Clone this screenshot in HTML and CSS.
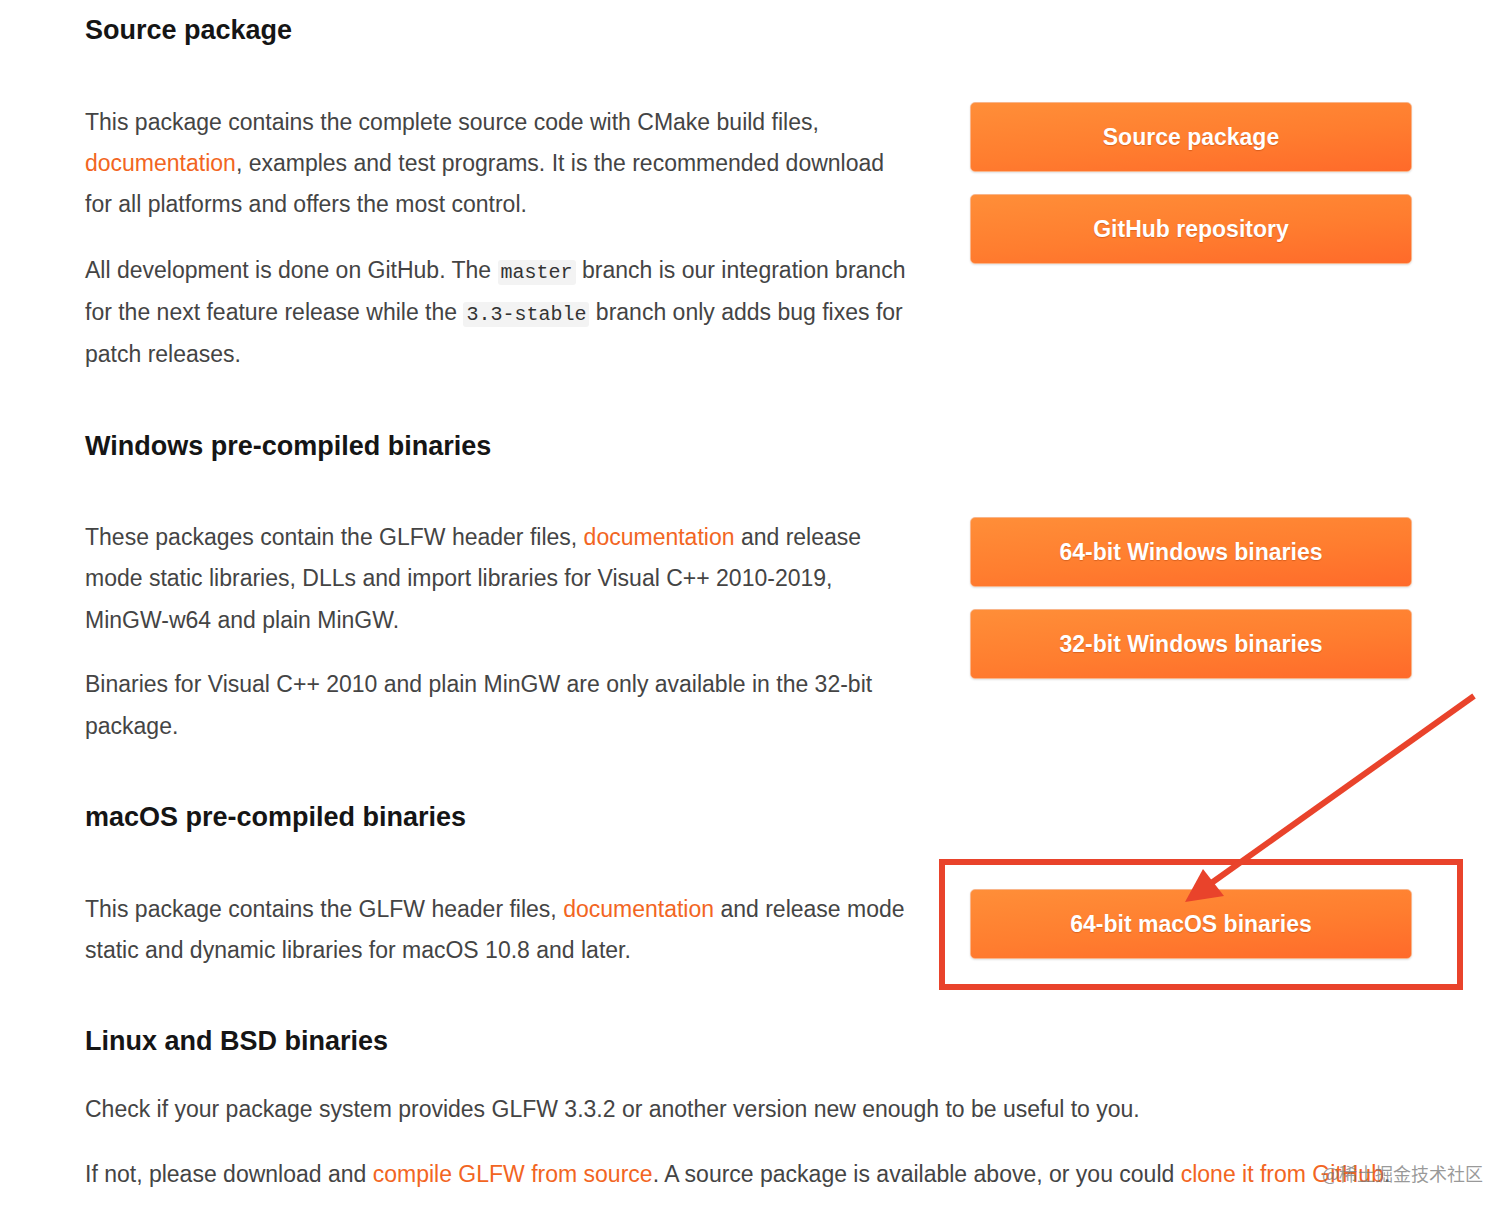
FILE: index.html
```html
<!doctype html>
<html>
<head>
<meta charset="utf-8">
<title>Download | GLFW</title>
<link rel="stylesheet" href="styles.css">
</head>
<body>
<div id="content">

	<h2 class="first">Source package</h2>
	<div class="row">
		<div class="text">
			<p>
				This package contains the complete source code with CMake build files,
				<a href="#">documentation</a>, examples and test programs. It is the recommended download
				for all platforms and offers the most control.
			</p>
			<p class="has-code">
				All development is done on GitHub. The <code>master</code> branch is our integration branch
				for the next feature release while the <code>3.3-stable</code> branch only adds bug fixes for
				patch releases.
			</p>
		</div>
		<div class="buttons">
			<a class="btn" href="#">Source package</a>
			<a class="btn" href="#">GitHub repository</a>
		</div>
	</div>

	<h2>Windows pre-compiled binaries</h2>
	<div class="row">
		<div class="text">
			<p>
				These packages contain the GLFW header files, <a href="#">documentation</a> and release
				mode static libraries, DLLs and import libraries for Visual C++ 2010-2019,
				MinGW-w64 and plain MinGW.
			</p>
			<p>
				Binaries for Visual C++ 2010 and plain MinGW are only available in the 32-bit
				package.
			</p>
		</div>
		<div class="buttons">
			<a class="btn" href="#">64-bit Windows binaries</a>
			<a class="btn" href="#">32-bit Windows binaries</a>
		</div>
	</div>

	<h2>macOS pre-compiled binaries</h2>
	<div class="row">
		<div class="text">
			<p>
				This package contains the GLFW header files, <a href="#">documentation</a> and release mode
				static and dynamic libraries for macOS 10.8 and later.
			</p>
		</div>
		<div class="buttons">
			<a class="btn" href="#">64-bit macOS binaries</a>
		</div>
	</div>

	<h2>Linux and BSD binaries</h2>
	<p>Check if your package system provides GLFW 3.3.2 or another version new enough to be useful to you.</p>
	<p>If not, please download and <a href="#">compile GLFW from source</a>. A source package is available above, or you could <a href="#">clone it from GitHub</a>.</p>

</div>

<!-- annotation drawn over the page -->
<svg class="annot" width="1512" height="1213" viewBox="0 0 1512 1213">
	<rect x="942" y="862" width="518" height="125" fill="none" stroke="#e9432b" stroke-width="6"/>
	<line x1="1474" y1="696" x2="1210" y2="884" stroke="#e9432b" stroke-width="6"/>
	<polygon points="1185,902 1203,869 1224,896" fill="#e9432b"/>
</svg>
<div class="watermark">@稀土掘金技术社区</div>
</body>
</html>
```

FILE: styles.css
```css
body {
	margin: 0;
	background: #fff;
	font-family: "Liberation Sans", Arial, sans-serif;
	color: #444;
}
a {
	color: #f26522;
	text-decoration: none;
}
#content {
	display: flex;
	flex-direction: column;
	padding: 0 0 40px 85px;
	width: 1327px;
}
h2 {
	font-size: 27px;
	line-height: 32px;
	font-weight: bold;
	color: #151515;
	margin: 31px 0 32px;
}
h2.first {
	margin-top: 14px;
}
p {
	font-size: 23px;
	line-height: 1.8;
	margin: 0 0 23px;
}
p.has-code {
	line-height: 42.3px;
}
code {
	font-family: "Liberation Mono", "DejaVu Sans Mono", monospace;
	font-size: 20px;
	line-height: 1;
	color: #333;
	background: #f3f3f3;
	padding: 1px 3px;
	border-radius: 3px;
}
.row {
	display: grid;
	grid-template-columns: 830px 442px;
	column-gap: 55px;
	margin-top: 23.5px;
}
.buttons {
	display: flex;
	flex-direction: column;
	gap: 22px;
}
.btn {
	display: block;
	height: 70px;
	line-height: 68px;
	text-align: center;
	color: #fff;
	font-size: 23px;
	font-weight: bold;
	text-shadow: 0 1px 1px rgba(150, 50, 0, 0.35);
	border-radius: 5px;
	border: 1px solid #f9b58a;
	box-sizing: border-box;
	background-image: linear-gradient(175deg, #ff8e38, #ff7d2f 55%, #ff6a2a);
	box-shadow: 0 1px 2px rgba(0, 0, 0, 0.12);
}
.annot {
	position: absolute;
	top: 0;
	left: 0;
	pointer-events: none;
}
.watermark {
	position: absolute;
	left: 1322px;
	top: 1160px;
	font-family: "Noto Sans CJK SC", sans-serif;
	font-size: 18px;
	color: rgba(120, 120, 120, 0.75);
}
```
